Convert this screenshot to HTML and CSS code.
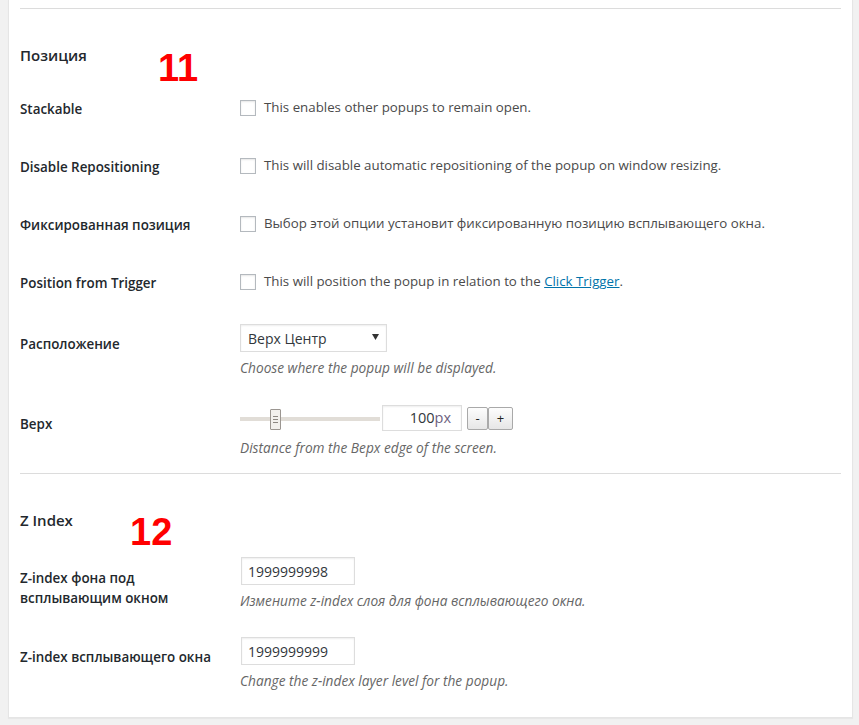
FILE: index.html
```html
<html>
    <head>
        <title>Настройки всплывающего окна</title>
        <meta charset="utf-8">
        <meta name="viewport" content="width=device-width, initial-scale=1.0">
        <link rel="stylesheet" href="styles.css">
    </head>
    <body>
        <div class="panel">
            <div class="section">
                <div class="divider"></div>
                <h3 class="section-title">Позиция<span class="mark mark-11">11</span></h3>

                <div class="row row-check">
                    <div class="row-label">Stackable</div>
                    <div class="row-field">
                        <label class="check"><input type="checkbox" class="checkbox">This enables other popups to remain open.</label>
                    </div>
                </div>
                <div class="row row-check">
                    <div class="row-label">Disable Repositioning</div>
                    <div class="row-field">
                        <label class="check"><input type="checkbox" class="checkbox">This will disable automatic repositioning of the popup on window resizing.</label>
                    </div>
                </div>
                <div class="row row-check">
                    <div class="row-label">Фиксированная позиция</div>
                    <div class="row-field">
                        <label class="check"><input type="checkbox" class="checkbox">Выбор этой опции установит фиксированную позицию всплывающего окна.</label>
                    </div>
                </div>
                <div class="row row-check">
                    <div class="row-label">Position from Trigger</div>
                    <div class="row-field">
                        <label class="check"><input type="checkbox" class="checkbox">This will position the popup in relation to the&nbsp;<a class="link" href="#">Click Trigger</a>.</label>
                    </div>
                </div>

                <div class="row">
                    <div class="row-label">Расположение</div>
                    <div class="row-field">
                        <div class="select">
                            <span>Верх Центр</span>
                            <svg class="select-arrow" width="7" height="6" viewBox="0 0 7 6"><path d="M0 0 L7 0 L3.5 6 Z" fill="#333"/></svg>
                        </div>
                        <p class="description">Choose where the popup will be displayed.</p>
                    </div>
                </div>
                <div class="row">
                    <div class="row-label">Верх</div>
                    <div class="row-field">
                        <div class="range">
                            <div class="slider">
                                <div class="slider-track"></div>
                                <div class="slider-handle" style="left: 30px;">
                                    <i></i><i></i><i></i>
                                </div>
                            </div>
                            <div class="range-value">100<span class="unit">px</span></div>
                            <button class="step" type="button">-</button>
                            <button class="step step-plus" type="button">+</button>
                        </div>
                        <p class="description">Distance from the Верх edge of the screen.</p>
                    </div>
                </div>
            </div>

            <div class="section">
                <div class="divider"></div>
                <h3 class="section-title">Z Index<span class="mark mark-12">12</span></h3>

                <div class="row">
                    <div class="row-label label-wrap">Z-index фона под всплывающим окном</div>
                    <div class="row-field">
                        <input class="text-input" type="text" value="1999999998">
                        <p class="description">Измените z-index слоя для фона всплывающего окна.</p>
                    </div>
                </div>
                <div class="row">
                    <div class="row-label">Z-index всплывающего окна</div>
                    <div class="row-field">
                        <input class="text-input" type="text" value="1999999999">
                        <p class="description">Change the z-index layer level for the popup.</p>
                    </div>
                </div>
            </div>
        </div>
    </body>
</html>
```

FILE: styles.css
```css
body {
    margin: 0;
    background-color: #f1f1f1;
    font-family: "Open Sans", "Noto Sans", sans-serif;
    font-size: 13px;
    color: #444;
}
.panel {
    box-sizing: border-box;
    width: 845px;
    margin-left: 8px;
    padding: 8px 11px 11px 11px;
    background-color: #fff;
    border: 1px solid #e5e5e5;
    border-top: none;
    box-shadow: 0 1px 1px rgba(0, 0, 0, 0.04);
}
.divider {
    height: 0;
    border-top: 1px solid #dcdcdc;
}
.section-title {
    position: relative;
    margin: 36px 0 16px 0;
    font-size: 15px;
    font-weight: 600;
    line-height: 20px;
    color: #23282d;
}
.mark {
    position: absolute;
    top: 4px;
    font-family: "Liberation Sans", Arial, sans-serif;
    font-size: 38px;
    font-weight: bold;
    line-height: 39px;
    color: #ff0000;
}
.mark-11 {
    left: 138px;
}
.mark-12 {
    left: 110px;
    top: 3px;
}
.row {
    display: flex;
    align-items: flex-start;
    padding-bottom: 16px;
}
.row-label {
    box-sizing: border-box;
    width: 220px;
    flex: none;
    padding-top: 22px;
    padding-right: 20px;
    font-size: 13.4px;
    font-weight: 600;
    line-height: 18px;
    color: #23282d;
}
.label-wrap {
    line-height: 20px;
}
.row-field {
    padding-top: 11px;
}
.row-check {
    height: 58px;
    padding-bottom: 0;
}
.row-check .row-label {
    padding-top: 19px;
}
.row-check .row-field {
    padding-top: 17px;
}
.check {
    display: flex;
    align-items: flex-start;
    font-size: 13.3px;
    line-height: 18px;
    color: #4a4a4a;
}
.checkbox {
    -webkit-appearance: none;
    appearance: none;
    box-sizing: border-box;
    width: 16px;
    height: 16px;
    margin: 2px 8px 0 0;
    background-color: #fff;
    border: 1px solid #b4b9be;
    box-shadow: inset 0 1px 2px rgba(0, 0, 0, 0.1);
}
.link {
    color: #0073aa;
    text-decoration: underline;
}
.select {
    box-sizing: border-box;
    display: flex;
    align-items: center;
    justify-content: space-between;
    width: 147px;
    height: 28px;
    padding: 0 7px 0 7px;
    border: 1px solid #ddd;
    box-shadow: inset 0 1px 2px rgba(0, 0, 0, 0.07);
    font-size: 14px;
    color: #32373c;
}
.select-arrow {
    margin-top: -2px;
}
.description {
    margin: 7px 0 0 0;
    font-size: 13.7px;
    font-style: italic;
    line-height: 18px;
    color: #666;
}
.range {
    display: flex;
    align-items: center;
    height: 28px;
}
.slider {
    position: relative;
    width: 140px;
    height: 28px;
    margin-right: 2px;
}
.slider-track {
    margin-top: 13px;
    height: 4px;
    background-color: #e1ddd7;
}
.slider-handle {
    position: absolute;
    top: 5px;
    box-sizing: border-box;
    width: 11px;
    height: 21px;
    padding-top: 6px;
    background-color: #f2f0ed;
    border: 1px solid #9b9691;
    border-radius: 1px;
}
.slider-handle i {
    display: block;
    width: 5px;
    height: 1px;
    margin: 0 auto 2px auto;
    background-color: #8c8782;
}
.range-value {
    box-sizing: border-box;
    width: 80px;
    height: 26px;
    padding-right: 10px;
    border: 1px solid #ddd;
    box-shadow: inset 0 1px 2px rgba(0, 0, 0, 0.07);
    font-size: 14.5px;
    line-height: 24px;
    text-align: right;
    color: #32373c;
}
.unit {
    color: #6d5f80;
}
.step {
    box-sizing: border-box;
    width: 21px;
    height: 23px;
    margin: 0;
    padding: 0;
    background: linear-gradient(#fdfdfd, #e6e6e6);
    border: 1px solid #a9a9a9;
    border-radius: 2px;
    font-family: "Open Sans", sans-serif;
    font-size: 13px;
    line-height: 20px;
    color: #222;
}
.range-value + .step {
    margin-left: 5px;
}
.step-plus {
    width: 25px;
}
.text-input {
    box-sizing: border-box;
    display: block;
    width: 114px;
    height: 28px;
    margin: 0 0 0 1px;
    padding: 0 6px;
    border: 1px solid #ddd;
    box-shadow: inset 0 1px 2px rgba(0, 0, 0, 0.07);
    font-family: "Open Sans", sans-serif;
    font-size: 14px;
    color: #32373c;
    outline: none;
}
```
